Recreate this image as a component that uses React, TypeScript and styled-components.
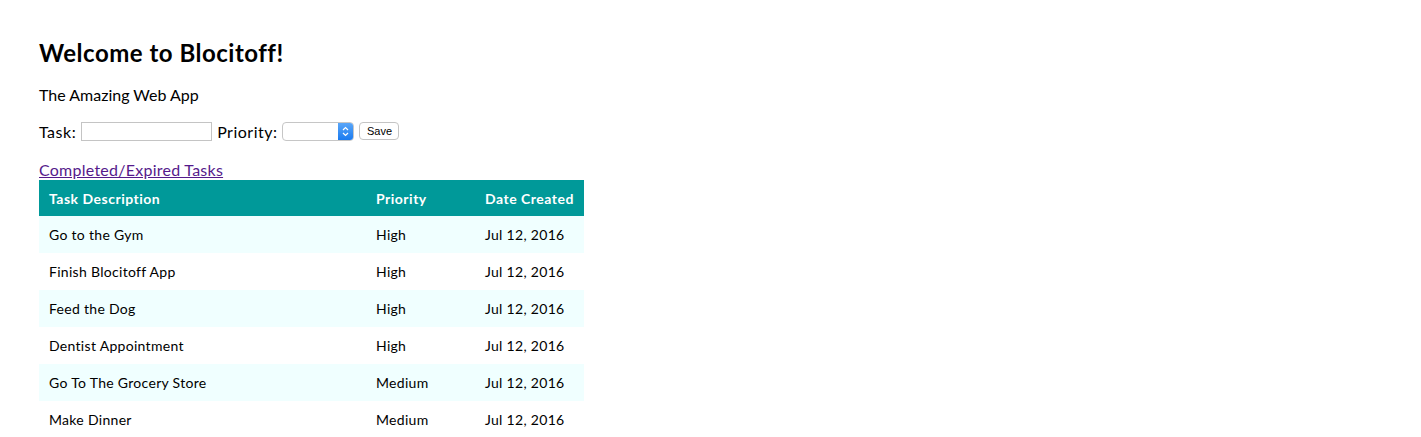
import React from "react";
import styled, { createGlobalStyle } from "styled-components";

const Global = createGlobalStyle`
  html, body { margin: 0; padding: 0; background: #fff; }
  body { font-family: "Lato", "DejaVu Sans", sans-serif; color: #000; }
`;

const Page = styled.div`
  padding: 38px 39px 0 39px;
`;

const Title = styled.h1`
  margin: 0;
  font-size: 24px;
  line-height: 30px;
  font-weight: 700;
  letter-spacing: 0.5px;
`;

const Subtitle = styled.p`
  margin: 18px 0 0 0;
  font-size: 16px;
  line-height: 18px;
`;

const Form = styled.form`
  margin-top: 16px;
  height: 22px;
  display: flex;
  align-items: center;
  font-size: 16px;
`;

const Label = styled.label`
  margin-right: 5px;
  letter-spacing: 0.5px;
`;

const TextInput = styled.input`
  box-sizing: border-box;
  width: 131px;
  height: 19px;
  border: 1px solid #c4c4c4;
  margin: 0 5px 0 0;
  padding: 0 2px;
  font-size: 13px;
`;

const Select = styled.div`
  box-sizing: border-box;
  width: 72px;
  height: 19px;
  border: 1px solid #c6c6c6;
  border-radius: 4px;
  background: #fff;
  display: flex;
  justify-content: flex-end;
  overflow: hidden;
  margin-right: 5px;
`;

const SelectArrow = styled.span`
  width: 15px;
  height: 100%;
  background: linear-gradient(#5aa6f8, #1a7bf0);
  display: flex;
  align-items: center;
  justify-content: center;
`;

const Button = styled.button`
  box-sizing: border-box;
  width: 40px;
  height: 18px;
  border: 1px solid #c4c4c4;
  border-radius: 4px;
  background: #fff;
  font-family: "Liberation Sans", Arial, sans-serif;
  font-size: 11px;
  padding: 0;
  color: #000;
`;

const Link = styled.a`
  display: block;
  margin-top: 19px;
  font-size: 16px;
  line-height: 18px;
  color: #551a8b;
  text-decoration: underline;
  letter-spacing: 0.25px;
  width: max-content;
`;

const Table = styled.table`
  margin-top: 1px;
  width: 545px;
  border-collapse: collapse;
  font-size: 14px;
  letter-spacing: 0.3px;
`;

const Th = styled.th<{ $w: number }>`
  width: ${(p) => p.$w}px;
  box-sizing: border-box;
  height: 36px;
  padding: 0 10px;
  text-align: left;
  background: #009999;
  color: #fff;
  font-weight: 700;
  letter-spacing: 0.5px;
`;

const Row = styled.tr<{ $alt: boolean }>`
  background: ${(p) => (p.$alt ? "#f0ffff" : "#fff")};
`;

const Td = styled.td`
  height: 37px;
  padding: 0 10px;
  box-sizing: border-box;
`;

const tasks: [string, string][] = [
  ["Go to the Gym", "High"],
  ["Finish Blocitoff App", "High"],
  ["Feed the Dog", "High"],
  ["Dentist Appointment", "High"],
  ["Go To The Grocery Store", "Medium"],
  ["Make Dinner", "Medium"],
];

export default function App() {
  return (
    <>
      <Global />
      <Page>
        <Title>Welcome to Blocitoff!</Title>
        <Subtitle>The Amazing Web App</Subtitle>
        <Form onSubmit={(e) => e.preventDefault()}>
          <Label>Task:</Label>
          <TextInput type="text" />
          <Label>Priority:</Label>
          <Select>
            <SelectArrow>
              <svg width="7" height="11" viewBox="0 0 7 11">
                <path d="M1 4 L3.5 1.5 L6 4 M1 7 L3.5 9.5 L6 7" stroke="#fff" strokeWidth="1.2" fill="none" />
              </svg>
            </SelectArrow>
          </Select>
          <Button type="submit">Save</Button>
        </Form>
        <Link href="#">Completed/Expired Tasks</Link>
        <Table>
          <thead>
            <tr>
              <Th $w={327}>Task Description</Th>
              <Th $w={109}>Priority</Th>
              <Th $w={109}>Date Created</Th>
            </tr>
          </thead>
          <tbody>
            {tasks.map(([d, p], i) => (
              <Row key={d} $alt={i % 2 === 0}>
                <Td>{d}</Td>
                <Td>{p}</Td>
                <Td>Jul 12, 2016</Td>
              </Row>
            ))}
          </tbody>
        </Table>
      </Page>
    </>
  );
}
